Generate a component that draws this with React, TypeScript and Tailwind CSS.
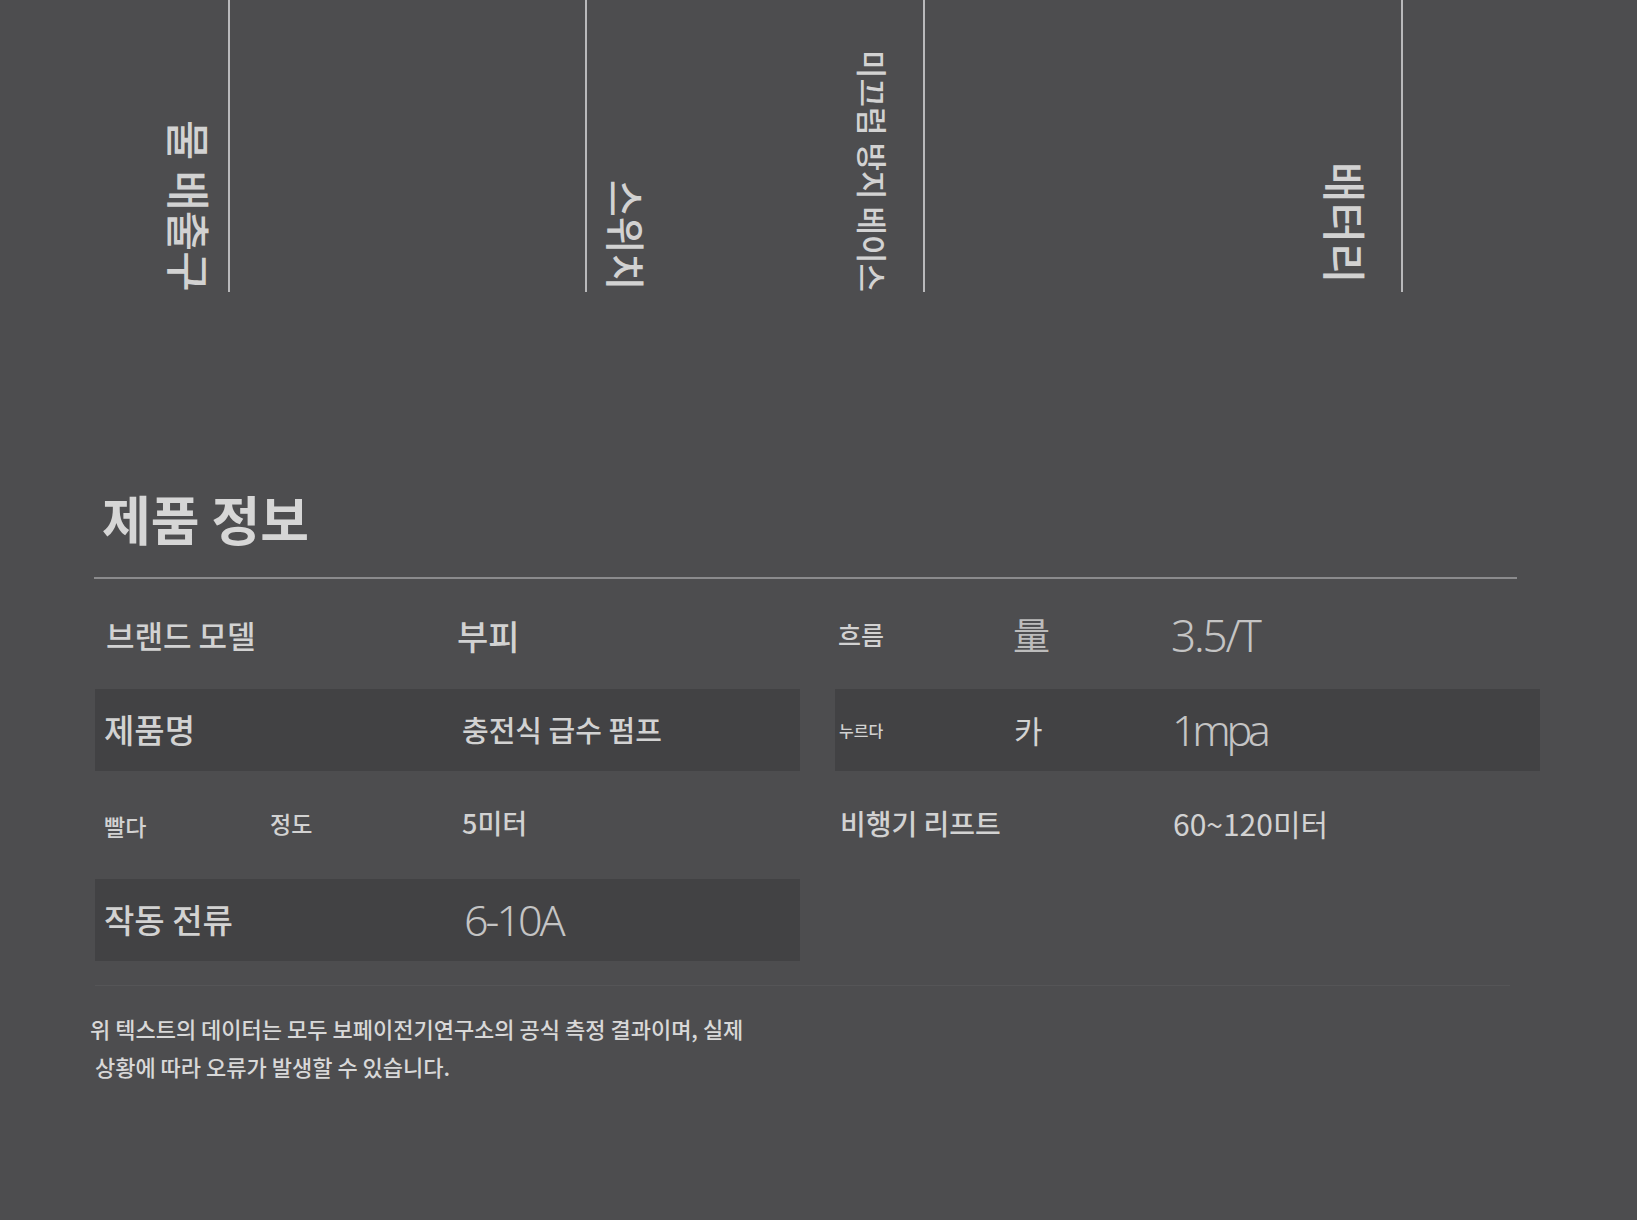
import React from 'react'

const kr = "font-['Noto_Sans_CJK_KR','Noto_Sans',sans-serif]"
const num = "font-['Noto_Sans','Noto_Sans_CJK_KR',sans-serif] font-light"
const side = '[writing-mode:vertical-rl] [text-orientation:sideways] whitespace-nowrap leading-none'

function Line({ className = '' }: { className?: string }) {
  return <div className={`w-[2px] h-full bg-[#b9b9bb] shrink-0 ${className}`} />
}

export default function App() {
  return (
    <div className={`w-[1637px] h-[1220px] bg-[#4d4d4f] text-[#d2d2d2] overflow-hidden ${kr}`}>
      {/* 부품 표시 */}
      <section className="flex items-end h-[292px]">
        <div className={`${side} ml-[168px] text-[44px] font-medium`}>물 배출구</div>
        <Line className="ml-[16px]" />
        <Line className="ml-[355px]" />
        <div className={`${side} ml-[20px] mb-[2px] text-[40px] font-medium`}>스위치</div>
        <div className={`${side} ml-[211px] text-[31px] font-medium`}>미끄럼 방지 베이스</div>
        <Line className="ml-[34px]" />
        <div className={`${side} ml-[399px] mb-[9px] text-[44px] font-medium`}>배터리</div>
        <Line className="ml-[33px]" />
      </section>

      {/* 제품 정보 */}
      <h1 className="mt-[198px] ml-[102px] text-[53px] leading-[56px] font-bold text-[#d6d6d6]">제품 정보</h1>
      <div className="mt-[31px] ml-[94px] w-[1423px] h-[2px] bg-[#8b8b8d]" />

      <div className="mt-[15px] ml-[95px] grid grid-cols-[705px_705px] gap-x-[35px] gap-y-[13px] auto-rows-[82px]">
        <div className="grid grid-cols-[166px_192px_1fr] items-center pl-[11px]">
          <span className="col-span-2 text-[31px] font-medium">브랜드 모델</span>
          <span className="text-[34px] font-medium -ml-[7px]">부피</span>
        </div>
        <div className="grid grid-cols-[175px_158px_1fr] items-center pl-[3px]">
          <span className="text-[25px] font-medium">흐름</span>
          <span className="text-[37px] text-[#bcbcbc]">量</span>
          <span className={`${num} text-[44px] tracking-[-0.05em] text-[#c4c4c4]`}>3.5/T</span>
        </div>

        <div className="grid grid-cols-[166px_192px_1fr] items-center pl-[9px] bg-[#424244]">
          <span className="col-span-2 text-[33px] font-medium">제품명</span>
          <span className="text-[29px] font-medium">충전식 급수 펌프</span>
        </div>
        <div className="grid grid-cols-[175px_158px_1fr] items-center pl-[4px] bg-[#424244]">
          <span className="text-[16px] font-medium">누르다</span>
          <span className="text-[31px]">카</span>
          <span className={`${num} text-[43px] tracking-[-0.1em] text-[#c4c4c4]`}>1mpa</span>
        </div>

        <div className="grid grid-cols-[166px_192px_1fr] items-center pl-[9px] pb-[4px]">
          <span className="text-[23px] font-medium mt-[6px]">빨다</span>
          <span className="text-[23px] font-medium">정도</span>
          <span className="text-[27px] font-medium">5미터</span>
        </div>
        <div className="grid grid-cols-[333px_1fr] items-center pl-[5px] pb-[4px]">
          <span className="text-[28px] font-medium">비행기 리프트</span>
          <span className="text-[30px]">60~120미터</span>
        </div>

        <div className="grid grid-cols-[166px_192px_1fr] items-center pl-[9px] bg-[#424244]">
          <span className="col-span-2 text-[33px] font-medium">작동 전류</span>
          <span className={`${num} text-[43px] tracking-[-0.07em] text-[#c4c4c4] ml-[2px]`}>6-10A</span>
        </div>
        <div />
      </div>

      <div className="mt-[24px] ml-[95px] w-[1415px] h-px bg-[#555557]" />

      <p className="mt-[23px] ml-[90px] text-[22px] leading-[38px] font-medium text-[#d8d8d8]">
        위 텍스트의 데이터는 모두 보페이전기연구소의 공식 측정 결과이며, 실제
        <br />
        &nbsp;상황에 따라 오류가 발생할 수 있습니다.
      </p>
    </div>
  )
}
